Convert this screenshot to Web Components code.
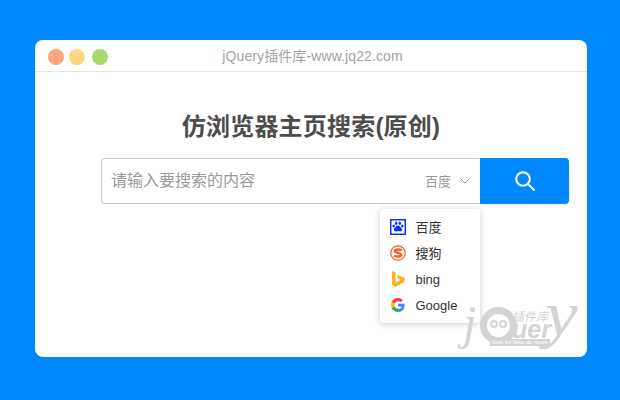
<!DOCTYPE html>
<html lang="zh">
<head>
<meta charset="utf-8">
<title>search</title>
<style>
  html, body { margin: 0; height: 100%; }
  body {
    background: #0088ff;
    font-family: "Liberation Sans", "Noto Sans CJK SC", sans-serif;
    padding: 40px 33px 43px 35px;
    box-sizing: border-box;
    display: flex;
  }
</style>
</head>
<body>
<browser-window label="jQuery插件库-www.jq22.com">
  <h-title>仿浏览器主页搜索(原创)</h-title>
  <search-box placeholder="请输入要搜索的内容" engine="百度">
    <engine-item name="百度">
      <svg viewBox="0 0 16 16" width="16" height="16"><rect x=".75" y=".75" width="14.500" height="14.500" fill="#fff" stroke="#0a2fff" stroke-width="1.500"/><ellipse cx="6.200" cy="4.300" rx="1.200" ry="1.700" fill="#0a2fff"/><ellipse cx="9.800" cy="4.300" rx="1.200" ry="1.700" fill="#0a2fff"/><ellipse cx="3.700" cy="7" rx="1.200" ry="1.600" fill="#0a2fff"/><ellipse cx="12.300" cy="7" rx="1.200" ry="1.600" fill="#0a2fff"/><path d="M8 6.400c-1.500 0-2 1.500-3.200 2.400-1.300 1-1.100 3.500.9 3.600.9 0 1.500-.4 2.300-.4s1.400.4 2.300.4c2-.1 2.200-2.600.9-3.600C10 7.900 9.500 6.400 8 6.400z" fill="#0a2fff"/></svg>
    </engine-item>
    <engine-item name="搜狗">
      <svg viewBox="0 0 16 16" width="16" height="16"><circle cx="8" cy="8" r="7.200" fill="#fff" stroke="#f0602f" stroke-width="1.300"/><path d="M12 5.300C10.500 4.300 5.200 4 4.700 6c-.4 2 6.800 1.600 6.600 3.800-.2 2.100-5.400 2-7.300.9" fill="none" stroke="#f0602f" stroke-width="2.400"/></svg>
    </engine-item>
    <engine-item name="bing" latin>
      <svg viewBox="0 0 16 16" width="16" height="16"><path d="M2 0l3.600 1.200v10.300l5-2.800-2.500-1.100-1.500-3.700 8 2.700v3.800L5.600 16 2 14z" fill="#ffb21d"/></svg>
    </engine-item>
    <engine-item name="Google" latin>
      <svg viewBox="0 0 16 16" width="16" height="16"><path d="M14.600 6.700H8.100v2.700h3.700c-.4 1.500-1.800 2.300-3.700 2.300V15c2.400 0 6.900-1.300 6.500-8.300z" fill="#4285f4"/><path d="M8.100 11.700c-1.700 0-3-1-3.500-2.500l-2.800 2.100C2.900 13.600 5.300 15 8.100 15z" fill="#34a853"/><path d="M4.600 9.200c-.3-.9-.3-1.600 0-2.500L1.800 4.600c-1 2-1 4.700 0 6.700z" fill="#fbbc05"/><path d="M4.600 6.700C5.100 5.200 6.400 4.300 8.100 4.300c1 0 1.800.3 2.500 1l2.300-2.300C11.600 1.800 10 1 8.100 1 5.300 1 2.900 2.500 1.800 4.600z" fill="#ea4335"/></svg>
    </engine-item>
  </search-box>
  <j-watermark></j-watermark>
</browser-window>

<template id="browser-window-tpl">
  <style>
    :host { display: flex; flex-direction: column; flex: 1; position: relative; background: #fff; border-radius: 8px; overflow: hidden; }
    .bar { height: 31px; border-bottom: 1px solid #e6e6e6; display: flex; align-items: center; padding: 0 0 0 13px; flex: none; }
    .dot { width: 16px; height: 16px; border-radius: 50%; margin-top: 2px; }
    .d1 { background: #fba77b; }
    .d2 { background: #fbd77f; margin-left: 5px; }
    .d3 { background: #a8d96d; margin-left: 7px; }
    .label { flex: 1; text-align: center; font-size: 14px; letter-spacing: .1px; color: #a3a3a3; margin: 0 0 2px -70px; }
    .body { flex: 1; display: flex; flex-direction: column; }
  </style>
  <div class="bar">
    <span class="dot d1"></span><span class="dot d2"></span><span class="dot d3"></span>
    <span class="label"></span>
  </div>
  <div class="body"><slot></slot></div>
</template>

<template id="h-title-tpl">
  <style>
    :host { display: block; text-align: center; font-size: 24px; font-weight: bold; letter-spacing: .2px; color: #4d4d4d; line-height: 34px; margin: 38px 0 0 0; }
  </style>
  <slot></slot>
</template>

<template id="search-box-tpl">
  <style>
    :host { display: flex; position: relative; height: 46px; margin: 14px 18px 0 66px; }
    .input { flex: 1; box-sizing: border-box; border: 1px solid #c9c9c9; border-right: 0; border-radius: 4px 0 0 4px; display: flex; align-items: center; padding: 0 10px 0 10px; font-size: 16px; color: #9a9a9a; }
    .ph { flex: 1; margin: 0 0 4px -1px; }
    .engine { font-size: 13px; color: #999; margin: 0 9px 2px 0; }
    .chev { display: block; }
    .btn { width: 89px; flex: none; background: #0088ff; border-radius: 0 4px 4px 0; display: flex; align-items: center; justify-content: center; }
    .menu { position: absolute; top: 51px; left: 279px; width: 100px; box-sizing: border-box; padding: 5px 0; background: #fff; border-radius: 3px; box-shadow: 0 1px 6px rgba(0,0,0,.2); }
  </style>
  <div class="input">
    <span class="ph"></span>
    <span class="engine"></span>
    <svg class="chev" width="10" height="6" viewBox="0 0 10 6"><path d="M.5.5L5 5 9.500.5" fill="none" stroke="#8f8f8f"/></svg>
  </div>
  <div class="btn">
    <svg width="22" height="22" viewBox="0 0 22 22"><circle cx="9" cy="9" r="6.800" fill="none" stroke="#fff" stroke-width="2"/><path d="M14 14l6.500 6.500" stroke="#fff" stroke-width="2" fill="none"/></svg>
  </div>
  <div class="menu"><slot></slot></div>
</template>

<template id="engine-item-tpl">
  <style>
    :host { display: flex; align-items: center; height: 26px; padding-left: 10px; font-size: 13px; color: #333; }
    .ic { width: 16px; height: 16px; display: block; margin-right: 9.500px; flex: none; }
    ::slotted(svg) { display: block; }
    .name { margin-bottom: 1px; }
    :host([latin]) .name { margin: 1px 0 0; }
  </style>
  <span class="ic"><slot></slot></span><span class="name"></span>
</template>

<template id="j-watermark-tpl">
  <style>
    :host { position: absolute; right: 7px; bottom: 5px; width: 130px; height: 52px; color: #d4d4d4; pointer-events: none; }
    span { position: absolute; white-space: nowrap; }
    .j { left: 13px; top: 1px; font: italic 48px/44px "Liberation Serif", serif; }
    .q { left: 30px; top: 7px; width: 37px; height: 37px; border: 7px solid #d4d4d4; border-radius: 50%; box-sizing: border-box; }
    .q i { position: absolute; top: 6px; width: 8px; height: 8px; border: 2px solid #d4d4d4; border-radius: 50%; box-sizing: border-box; }
    .q i:first-child { left: 3px; }
    .q i:last-child { left: 12px; }
    .u { left: 62px; top: 23px; font: italic bold 25px/13px "Liberation Sans", sans-serif; }
    .y { left: 95px; top: -8px; font: italic 64px/44px "Liberation Serif", serif; transform: scaleX(1.15); transform-origin: left; }
    .cn { left: 62px; top: 9px; font: italic 12px/14px "Noto Sans CJK SC", sans-serif; }
    .tag { left: 40px; top: 39px; font: 6px/7px "Liberation Sans", sans-serif; color: #fff; background: #d4d4d4; padding: 0 2px; }
  </style>
  <span class="j">j</span><span class="q"><i></i><i></i></span><span class="u">uer</span><span class="y">y</span><span class="cn">插件库</span><span class="tag">look for less do more</span>
</template>

<script>
function mount(el, id) {
  el.attachShadow({ mode: 'open' });
  el.shadowRoot.appendChild(document.getElementById(id).content.cloneNode(true));
  return el.shadowRoot;
}

class BrowserWindow extends HTMLElement {
  connectedCallback() {
    const root = mount(this, 'browser-window-tpl');
    root.querySelector('.label').textContent = this.getAttribute('label');
  }
}
class HTitle extends HTMLElement {
  connectedCallback() { mount(this, 'h-title-tpl'); }
}
class SearchBox extends HTMLElement {
  connectedCallback() {
    const root = mount(this, 'search-box-tpl');
    root.querySelector('.ph').textContent = this.getAttribute('placeholder');
    root.querySelector('.engine').textContent = this.getAttribute('engine');
  }
}
class EngineItem extends HTMLElement {
  connectedCallback() {
    const root = mount(this, 'engine-item-tpl');
    root.querySelector('.name').textContent = this.getAttribute('name');
  }
}
class JWatermark extends HTMLElement {
  connectedCallback() { mount(this, 'j-watermark-tpl'); }
}

customElements.define('browser-window', BrowserWindow);
customElements.define('h-title', HTitle);
customElements.define('search-box', SearchBox);
customElements.define('engine-item', EngineItem);
customElements.define('j-watermark', JWatermark);
</script>
</body>
</html>
